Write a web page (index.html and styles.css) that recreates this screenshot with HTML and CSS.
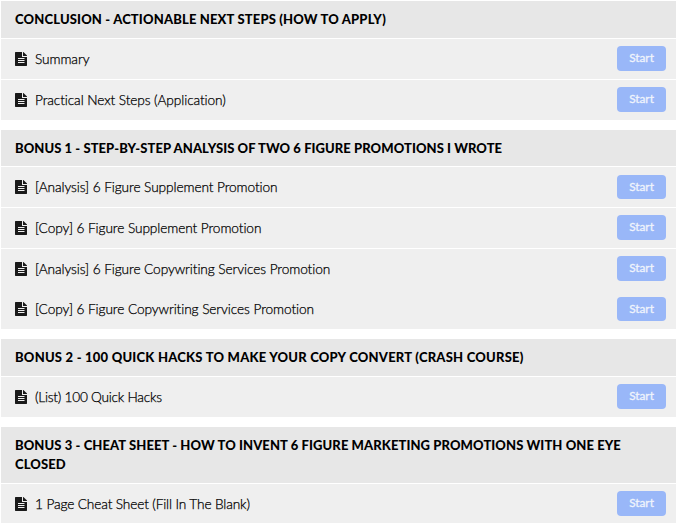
FILE: index.html
```html
<!DOCTYPE html>
<html>
<head>
	<meta charset="utf-8">
	<title>Course Curriculum</title>
	<link rel="stylesheet" href="styles.css">
</head>
<body>
	<svg class="sprite">
		<symbol id="doc" viewBox="0 0 12 14">
			<path fill-rule="evenodd" d="M.5 0H7V5H12V13.5L11.5 14H.5L0 13.5V.5ZM3 6V7H9.5V6ZM3 8V9H9.5V8ZM3 10V11H9.5V10Z"/>
			<path d="M8 0H8.4L12 3.6V4H8Z"/>
		</symbol>
	</svg>
	<div class="course">
		<div class="section conclusion">
			<h2 class="section-title">CONCLUSION - ACTIONABLE NEXT STEPS (HOW TO APPLY)</h2>
			<ul>
				<li class="item"><svg class="icon"><use href="#doc"/></svg><span class="name">Summary</span><a class="btn">Start</a></li>
				<li class="item"><svg class="icon"><use href="#doc"/></svg><span class="name">Practical Next Steps (Application)</span><a class="btn">Start</a></li>
			</ul>
		</div>
		<div class="section bonus1">
			<h2 class="section-title">BONUS 1 - STEP-BY-STEP ANALYSIS OF TWO 6 FIGURE PROMOTIONS I WROTE</h2>
			<ul>
				<li class="item"><svg class="icon"><use href="#doc"/></svg><span class="name">[Analysis] 6 Figure Supplement Promotion</span><a class="btn btn-short">Start</a></li>
				<li class="item"><svg class="icon"><use href="#doc"/></svg><span class="name">[Copy] 6 Figure Supplement Promotion</span><a class="btn">Start</a></li>
				<li class="item"><svg class="icon"><use href="#doc"/></svg><span class="name">[Analysis] 6 Figure Copywriting Services Promotion</span><a class="btn">Start</a></li>
				<li class="item joined"><svg class="icon"><use href="#doc"/></svg><span class="name">[Copy] 6 Figure Copywriting Services Promotion</span><a class="btn btn-short">Start</a></li>
			</ul>
		</div>
		<div class="section bonus2">
			<h2 class="section-title">BONUS 2 - 100 QUICK HACKS TO MAKE YOUR COPY CONVERT (CRASH COURSE)</h2>
			<ul>
				<li class="item"><svg class="icon"><use href="#doc"/></svg><span class="name">(List) 100 Quick Hacks</span><a class="btn">Start</a></li>
			</ul>
		</div>
		<div class="section bonus3">
			<h2 class="section-title">BONUS 3 - CHEAT SHEET - HOW TO INVENT 6 FIGURE MARKETING PROMOTIONS WITH ONE EYE CLOSED</h2>
			<ul>
				<li class="item"><svg class="icon"><use href="#doc"/></svg><span class="name">1 Page Cheat Sheet (Fill In The Blank)</span><a class="btn">Start</a></li>
			</ul>
		</div>
	</div>
</body>
</html>
```
FILE: styles.css
```css
body{
	margin: 0;
	background-color: #fff;
	font-family: Lato, "Liberation Sans", sans-serif;
	font-variant-ligatures: none;
	color: #000;
}
ul{
	list-style: none;
	margin: 0;
	padding: 0;
}
.sprite{
	display: none;
}
.course{
	width: 675px;
	padding: 1px 0 0 1px;
}
.section{
	margin-bottom: 10px;
}
.section-title{
	box-sizing: border-box;
	min-height: 37px;
	margin: 0;
	padding: 9px 40px 9px 14px;
	background-color: #e7e7e7;
	font-size: 13px;
	font-weight: 900;
	line-height: 19px;
	letter-spacing: .09px;
}
.conclusion .section-title{
	letter-spacing: .16px;
}
.bonus1 .section-title{
	min-height: 36px;
	padding-bottom: 8px;
	letter-spacing: .07px;
}
.bonus2 .section-title{
	letter-spacing: .23px;
}
.item{
	display: flex;
	align-items: center;
	box-sizing: border-box;
	height: 41px;
	padding: 0 10px 0 14px;
	border-top: 1px solid #fff;
	background-color: #efefef;
}
.item.joined{
	height: 40px;
	border-top: none;
}
.bonus3 .item{
	height: 40px;
}
.icon{
	width: 12px;
	height: 14px;
	margin-right: 8px;
	fill: #1a1a1a;
}
.name{
	flex: 1;
	font-size: 13.7px;
	font-weight: 300;
	line-height: 20px;
	letter-spacing: -.09px;
	white-space: nowrap;
	-webkit-text-stroke: .25px #000;
}
.bonus2 .name{
	letter-spacing: -.25px;
}
.bonus3 .name{
	letter-spacing: -.14px;
}
.btn{
	align-self: flex-start;
	width: 49px;
	height: 25px;
	margin-top: 7px;
	border-radius: 4px;
	background-color: #99b7f8;
	color: #f0f4fc;
	font-size: 11.8px;
	line-height: 24px;
	text-align: center;
	-webkit-text-stroke: .3px #f0f4fc;
}
.btn-short{
	height: 24px;
	margin-top: 8px;
	line-height: 23px;
}
```
